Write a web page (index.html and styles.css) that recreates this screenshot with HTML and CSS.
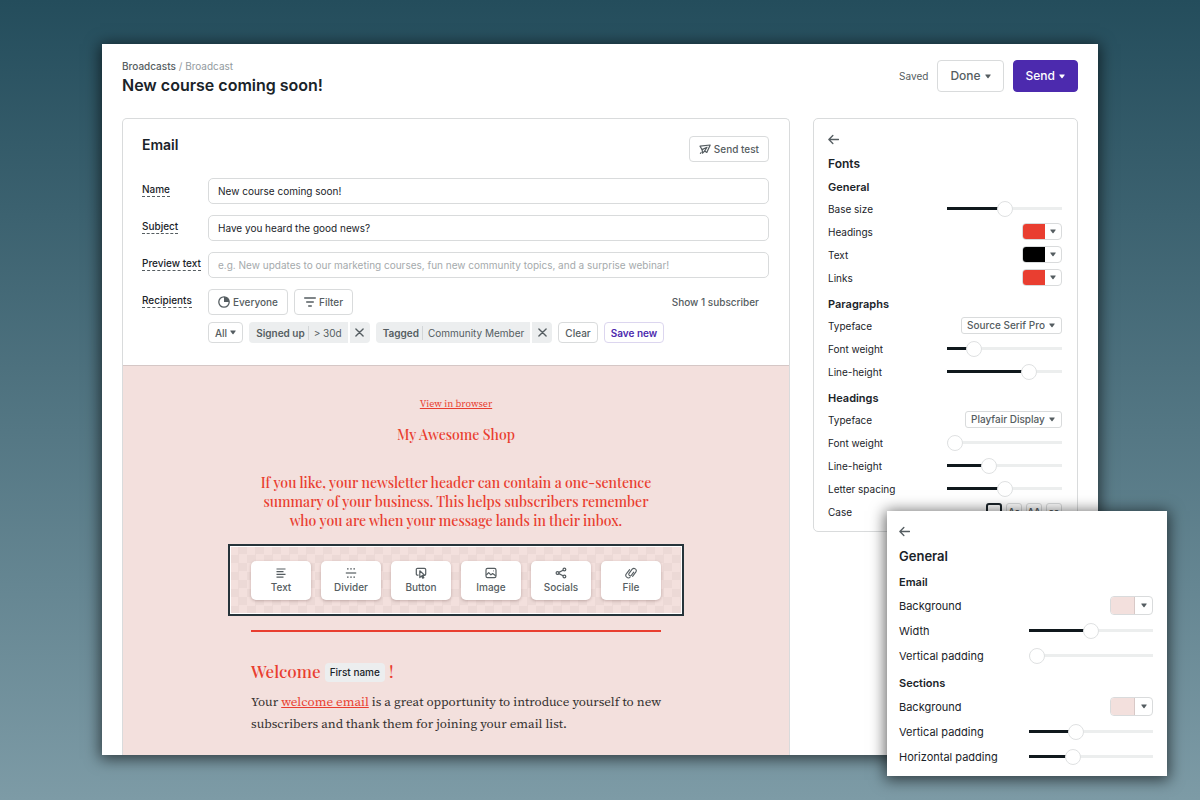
FILE: index.html
```html
<!DOCTYPE html>
<html lang="en">
<head>
<meta charset="utf-8">
<title>New course coming soon!</title>
<link rel="stylesheet" href="styles.css">
</head>
<body>
<svg class="defs" aria-hidden="true">
  <symbol id="caret" viewBox="0 0 6 5"><path d="M0.6 0.5h4.8q.6 0 .3.6L3.5 4.1q-.5.5-1 0L.3 1.100q-.3-.6.3-.6z" fill="currentColor"/></symbol>
  <symbol id="back" viewBox="0 0 10 10"><path d="M9.600 5H1M4.400 1.300L.8 5l3.600 3.700" fill="none" stroke="currentColor" stroke-width="1.200" stroke-linecap="round" stroke-linejoin="round"/></symbol>
  <symbol id="cross" viewBox="0 0 10 10"><path d="M1 1l8 8M9 1L1 9" fill="none" stroke="currentColor" stroke-width="1.500" stroke-linecap="round"/></symbol>
</svg>

<main class="window">
  <header class="topbar">
    <div class="titles">
      <nav class="crumbs"><a href="#">Broadcasts</a> / <span>Broadcast</span></nav>
      <h1>New course coming soon!</h1>
    </div>
    <div class="actions">
      <span class="saved">Saved</span>
      <button class="btn btn-large" type="button">Done <svg class="caret"><use href="#caret"/></svg></button>
      <button class="btn btn-large btn-primary" type="button">Send <svg class="caret"><use href="#caret"/></svg></button>
    </div>
  </header>

  <div class="columns">
    <section class="card editor">
      <div class="settings">
        <div class="settings-head">
          <h2>Email</h2>
          <button class="btn btn-medium" type="button">
            <svg class="icon-plane" viewBox="0 0 12 12" fill="none" stroke="currentColor" stroke-width="1.200" stroke-linejoin="round" stroke-linecap="round"><path d="M1 3.200L11.200 2 7.800 9.400 5.700 8 3.600 10.200 3.100 6.600z"/><path d="M3.100 6.600L8 4.200 5.700 8M1.400 10.400l.7-.7"/></svg>
            Send test
          </button>
        </div>
        <form class="fields">
          <label for="name"><span>Name</span></label>
          <input class="textbox" id="name" type="text" value="New course coming soon!">
          <label for="subject"><span>Subject</span></label>
          <input class="textbox" id="subject" type="text" value="Have you heard the good news?">
          <label for="preview"><span>Preview text</span></label>
          <input class="textbox" id="preview" type="text" placeholder="e.g. New updates to our marketing courses, fun new community topics, and a surprise webinar!">
          <div class="field-label"><span>Recipients</span></div>
          <div class="recipients">
            <button class="btn btn-medium" type="button">
              <svg class="icon-pie" viewBox="0 0 12 12"><circle cx="6" cy="6" r="5.200" fill="none" stroke="currentColor" stroke-width="1.300"/><path d="M6 6V.8A5.200 5.200 0 0 1 11.200 6z" fill="currentColor"/></svg>
              Everyone
            </button>
            <button class="btn btn-medium" type="button">
              <svg class="icon-filter" viewBox="0 0 12 12"><path d="M.7 2h10.600M2.700 6h6.600M4.700 10h2.600" fill="none" stroke="currentColor" stroke-width="1.400" stroke-linecap="round"/></svg>
              Filter
            </button>
            <a class="subscriber-link" href="#">Show 1 subscriber</a>
          </div>
          <div class="filters">
            <button class="btn btn-small" type="button">All <svg class="caret"><use href="#caret"/></svg></button>
            <div class="chip">
              <button class="chip-body" type="button"><strong>Signed up</strong><span>&gt; 30d</span></button>
              <button class="chip-close" type="button" aria-label="Remove signed up filter"><svg><use href="#cross"/></svg></button>
            </div>
            <div class="chip">
              <button class="chip-body" type="button"><strong>Tagged</strong><span>Community Member</span></button>
              <button class="chip-close" type="button" aria-label="Remove tag filter"><svg><use href="#cross"/></svg></button>
            </div>
            <button class="btn btn-small" type="button">Clear</button>
            <button class="btn btn-small btn-accent" type="button">Save new</button>
          </div>
        </form>
      </div>

      <article class="message">
        <a class="browser-link" href="#">View in browser</a>
        <h2 class="shop">My Awesome Shop</h2>
        <p class="summary">If you like, your newsletter header can contain a one-sentence<br>summary of your business. This helps subscribers remember<br>who you are when your message lands in their inbox.</p>
        <div class="blocks">
          <button class="block" type="button"><svg viewBox="0 0 12 12"><path d="M1.500 2h9M1.500 4.700h7M1.500 7.400h9M1.500 10.100h7"/></svg>Text</button>
          <button class="block" type="button"><svg viewBox="0 0 12 12"><path d="M.8 6h10.400"/><path d="M2 1.800h8.400M2 10.200h8.400" stroke-dasharray="1.600 1.600"/></svg>Divider</button>
          <button class="block" type="button"><svg viewBox="0 0 12 12"><path d="M3.500 8.200H2.600A1.300 1.300 0 0 1 1.300 6.900V2.600A1.300 1.300 0 0 1 2.600 1.300h6.800a1.300 1.300 0 0 1 1.300 1.300v4.300a1.300 1.300 0 0 1-.7 1.200M4.800 3.800v6.800l1.700-1.700 1.200 2.300 1.100-.6-1.200-2.200h2.200z"/></svg>Button</button>
          <button class="block" type="button"><svg viewBox="0 0 12 12"><rect x="1" y="1.300" width="10" height="9.400" rx="1.600"/><path d="M1.300 8l2.400-2.400 2.200 2.300L7.600 6.500 10.700 8.700M8 3.800h.6"/></svg>Image</button>
          <button class="block" type="button"><svg viewBox="0 0 12 12"><circle cx="2.500" cy="6" r="1.400"/><circle cx="9.400" cy="2.500" r="1.400"/><circle cx="9.400" cy="9.500" r="1.400"/><path d="M3.800 5.400L8.100 3.200M3.800 6.600L8.100 8.800"/></svg>Socials</button>
          <button class="block" type="button"><svg viewBox="0 0 12 12"><path stroke-width="1.100" stroke-linecap="round" d="M7.200 2.200L3.900 6.600A1.500 1.500 0 0 0 6.300 8.300L8.700 5.100M7.200 2.200A2.300 2.300 0 0 1 10.900 4.900L7.600 9.300M4.600 2.600L1.500 6.700A2.400 2.400 0 0 0 5.200 10"/></svg>File</button>
        </div>
        <hr class="rule">
        <div class="copy">
          <h3>Welcome <span class="merge-tag">First name</span> !</h3>
          <p>Your <a href="#">welcome email</a> is a great opportunity to introduce yourself to new<br>subscribers and thank them for joining your email list.</p>
        </div>
      </article>
    </section>

    <aside class="card panel fonts-panel">
      <button class="back" type="button" aria-label="Back"><svg><use href="#back"/></svg></button>
      <h2>Fonts</h2>
      <h3>General</h3>
      <div class="row"><label for="base">Base size</label><input id="base" type="range" value="50" style="--value:50%"></div>
      <div class="row"><span>Headings</span><button class="color" type="button" aria-label="Headings color"><i class="swatch red"></i><svg class="caret"><use href="#caret"/></svg></button></div>
      <div class="row"><span>Text</span><button class="color" type="button" aria-label="Text color"><i class="swatch black"></i><svg class="caret"><use href="#caret"/></svg></button></div>
      <div class="row"><span>Links</span><button class="color" type="button" aria-label="Links color"><i class="swatch red"></i><svg class="caret"><use href="#caret"/></svg></button></div>
      <h3>Paragraphs</h3>
      <div class="row"><label for="ptype">Typeface</label><span class="select"><select id="ptype"><option>Source Serif Pro</option></select><svg class="caret"><use href="#caret"/></svg></span></div>
      <div class="row"><label for="pweight">Font weight</label><input id="pweight" type="range" value="19" style="--value:19%"></div>
      <div class="row"><label for="pline">Line-height</label><input id="pline" type="range" value="75" style="--value:75%"></div>
      <h3>Headings</h3>
      <div class="row"><label for="htype">Typeface</label><span class="select"><select id="htype"><option>Playfair Display</option></select><svg class="caret"><use href="#caret"/></svg></span></div>
      <div class="row"><label for="hweight">Font weight</label><input id="hweight" type="range" value="0" style="--value:0%"></div>
      <div class="row"><label for="hline">Line-height</label><input id="hline" type="range" value="34" style="--value:34%"></div>
      <div class="row"><label for="hspace">Letter spacing</label><input id="hspace" type="range" value="50" style="--value:50%"></div>
      <div class="row"><span>Case</span><span class="cases"><button class="active" type="button">–</button><button type="button">Aa</button><button type="button">AA</button><button type="button">aa</button></span></div>
    </aside>
  </div>
</main>

<aside class="panel general-panel">
  <button class="back" type="button" aria-label="Back"><svg><use href="#back"/></svg></button>
  <h2>General</h2>
  <h3>Email</h3>
  <div class="row"><span>Background</span><button class="color" type="button" aria-label="Email background"><i class="swatch pink"></i><svg class="caret"><use href="#caret"/></svg></button></div>
  <div class="row"><label for="ewidth">Width</label><input id="ewidth" type="range" value="50" style="--value:50%"></div>
  <div class="row"><label for="epad">Vertical padding</label><input id="epad" type="range" value="0" style="--value:0%"></div>
  <h3>Sections</h3>
  <div class="row"><span>Background</span><button class="color" type="button" aria-label="Sections background"><i class="swatch pink"></i><svg class="caret"><use href="#caret"/></svg></button></div>
  <div class="row"><label for="svpad">Vertical padding</label><input id="svpad" type="range" value="36" style="--value:36%"></div>
  <div class="row"><label for="shpad">Horizontal padding</label><input id="shpad" type="range" value="33" style="--value:33%"></div>
</aside>
</body>
</html>
```
FILE: styles.css
```css
:root {
  --ink: #1a2329;
  --muted: #555d61;
  --line: #d9dbdc;
  --pink: #f3e0dd;
  --red: #e93e30;
  --purple: #4c2aae;
}

* { box-sizing: border-box; }

body {
  display: grid;
  position: relative;
  min-height: 100vh;
  margin: 0;
  padding: 44px 102px 45px;
  background: linear-gradient(#244d5c, #7d9ba6);
  color: var(--ink);
  font-family: Inter, "Liberation Sans", sans-serif;
  font-size: 11px;
  line-height: 14px;
}

h1, h2, h3, p { margin: 0; }
h1, h2, h3 { font-weight: 600; }
button, input, select { font: inherit; color: inherit; margin: 0; }
button { padding: 0; border: 0; background: none; white-space: nowrap; }
svg { flex: none; }
.defs { position: absolute; width: 0; height: 0; }
.caret { width: 6px; height: 5px; }

.window {
  display: flex;
  flex-direction: column;
  min-width: 0;
  padding: 16px 20px 0;
  background: #fff;
  box-shadow: 0 2px 14px 2px rgba(0, 0, 0, 0.6);
}

.topbar { display: flex; justify-content: space-between; }
.crumbs { font-size: 10px; line-height: 12px; color: #929a9e; }
.crumbs a { color: var(--muted); font-weight: 500; text-decoration: none; }
h1 { margin-top: 2px; font-size: 16px; line-height: 22px; }
.actions { display: flex; align-items: center; gap: 9px; height: 32px; }
.saved { color: var(--muted); font-size: 10px; }

.btn {
  display: inline-flex;
  align-items: center;
  justify-content: center;
  border: 1px solid var(--line);
  border-radius: 4px;
  background: #fff;
  color: var(--muted);
  font-weight: 500;
}
.btn-large { gap: 4px; height: 32px; padding: 0 12px; font-size: 12px; }
.btn-primary { border-color: var(--purple); background: var(--purple); color: #fff; }
.btn-medium { gap: 3px; height: 26px; padding: 0 9px; font-size: 10px; }
.btn-small { gap: 3px; height: 21px; padding: 0 6px; font-size: 10px; }
.btn-accent { border-color: #dcd6ef; color: var(--purple); font-weight: 600; }
.icon-plane, .icon-pie, .icon-filter { width: 12px; height: 12px; }

.columns {
  display: grid;
  flex: 1;
  grid-template-columns: minmax(0, 1fr) 265px;
  gap: 23px;
  align-items: start;
  margin-top: 22px;
}
.card { border: 1px solid var(--line); border-radius: 5px; }

.editor {
  display: flex;
  flex-direction: column;
  align-self: stretch;
  border-bottom: 0;
  border-radius: 5px 5px 0 0;
}
.settings { padding: 17px 20px 22px 19px; }
.settings-head { display: flex; align-items: start; justify-content: space-between; height: 42px; }
.settings-head h2 { font-size: 14px; line-height: 18px; }
.fields {
  display: grid;
  grid-template-columns: 66px minmax(0, 1fr);
  row-gap: 11px;
}
.fields label, .field-label { padding-top: 5px; font-size: 10px; line-height: 13px; font-weight: 500; white-space: nowrap; }
.fields label span, .field-label span { display: inline-block; border-bottom: 1px dashed var(--muted); }
.textbox {
  width: 100%;
  height: 26px;
  padding: 0 9px;
  border: 1px solid var(--line);
  border-radius: 5px;
  background: #fff;
  font-size: 10px;
}
.textbox::placeholder { color: #a5aaac; opacity: 1; }
.recipients { display: flex; align-items: center; gap: 6px; }
.subscriber-link { margin-left: auto; padding-right: 10px; color: var(--muted); font-size: 10px; font-weight: 500; text-decoration: none; }
.filters { display: flex; grid-column: 2; gap: 6px; margin-top: -4px; }
.chip { display: flex; gap: 2px; height: 21px; color: var(--muted); font-size: 10px; }
.chip-body, .chip-close { background: #eceeef; }
.chip-body { display: flex; align-items: center; padding: 0 6px 0 7px; border-radius: 4px 0 0 4px; }
.chip-body strong { padding-right: 3px; border-right: 1px solid #d3d6d8; font-weight: 600; }
.chip-body span { padding-left: 5px; }
.chip-close { display: grid; place-items: center; width: 20px; border-radius: 0 4px 4px 0; }
.chip-close svg { width: 9px; height: 9px; }

.message {
  display: flex;
  flex: 1;
  flex-direction: column;
  align-items: center;
  padding: 32px 20px 20px;
  border-top: 1px solid #d5c7c6;
  background: var(--pink);
  color: var(--red);
  font-family: "Playfair Display", "Liberation Serif", serif;
  font-weight: 500;
}
.browser-link, .copy p {
  font-family: "Source Serif Pro", "Source Serif 4", "Noto Serif", "Liberation Serif", serif;
  font-weight: 400;
}
.browser-link { font-size: 10px; line-height: 12px; color: var(--red); }
.shop { margin-top: 15px; font-size: 14px; line-height: 20px; font-weight: 500; }
.summary { margin-top: 28px; font-size: 14px; line-height: 19px; text-align: center; }
.blocks {
  display: flex;
  justify-content: center;
  gap: 10px;
  margin-top: 14px;
  padding: 15px 21px 14px;
  border: 2px solid #26343a;
  background: repeating-conic-gradient(#ecd9d6 0 25%, #f3e0dd 0 50%) 0 0 / 17px 17px;
  box-shadow: inset 0 0 0 1px #fff;
}
.block {
  display: flex;
  flex-direction: column;
  align-items: center;
  gap: 1px;
  width: 60px;
  height: 39px;
  padding-top: 6px;
  border-radius: 5px;
  background: #fff;
  box-shadow: 0 1px 3px rgba(60, 20, 20, 0.25);
  color: var(--muted);
  font: 500 10px/14px Inter, "Liberation Sans", sans-serif;
}
.block svg { width: 12px; height: 12px; fill: none; stroke: currentColor; stroke-width: 1.2; stroke-linejoin: round; }
.rule { width: 410px; height: 2px; margin: 14px 0 0; border: 0; background: var(--red); }
.copy { width: 410px; margin-top: 27px; white-space: nowrap; }
.copy h3 { font-size: 17px; line-height: 24px; font-weight: 500; }
.merge-tag {
  display: inline-block;
  padding: 3px 5px;
  border-radius: 4px;
  background: #eceeef;
  color: var(--ink);
  font: 500 10px/13px Inter, "Liberation Sans", sans-serif;
  vertical-align: 2px;
}
.copy p { margin-top: 8px; color: #33302f; font-size: 13px; line-height: 22px; }
.copy a { color: var(--red); }

.panel { display: flex; flex-direction: column; }
.panel .row { display: flex; align-items: center; justify-content: space-between; }
.back { display: grid; place-items: center start; color: var(--muted); }
.back svg { width: 11px; height: 11px; }

.fonts-panel { padding: 13px 15px 8px 14px; }
.fonts-panel .back { height: 14px; }
.fonts-panel h2 { margin-top: 9px; font-size: 12px; line-height: 17px; }
.fonts-panel h3 { margin-top: 5px; font-size: 11px; line-height: 20px; }
.fonts-panel .row { height: 23px; font-size: 10px; }

.general-panel {
  position: absolute;
  right: 33px;
  bottom: 24px;
  width: 280px;
  padding: 13px 14px 7px 12px;
  background: #fff;
  box-shadow: 0 2px 14px 2px rgba(0, 0, 0, 0.6);
}
.general-panel .back { height: 14px; }
.general-panel h2 { margin-top: 8px; font-size: 13px; line-height: 21px; }
.general-panel h3 { margin-top: 5px; font-size: 11px; line-height: 21px; }
.general-panel .row { height: 25px; font-size: 11px; }

input[type="range"] {
  width: 115px;
  height: 16px;
  appearance: none;
  background: linear-gradient(to right, #10181d var(--value), #eceeee var(--value)) center / 100% 3px no-repeat;
}
input[type="range"]::-webkit-slider-thumb {
  width: 16px;
  height: 16px;
  appearance: none;
  border: 1px solid #dfe1e2;
  border-radius: 50%;
  background: #fff;
}
.general-panel input[type="range"] { width: 124px; }

.color {
  display: flex;
  width: 40px;
  height: 17px;
  overflow: hidden;
  border: 1px solid var(--line);
  border-radius: 4px;
  color: var(--muted);
}
.color .caret { align-self: center; margin: auto; }
.swatch { width: 22px; height: 100%; }
.red { background: var(--red); }
.black { background: #000; }
.pink { background: var(--pink); border-right: 1px solid #d8c9c7; }
.general-panel .color { width: 43px; height: 19px; }
.general-panel .swatch { width: 24px; }

.select { position: relative; display: flex; color: var(--muted); }
.select select {
  height: 17px;
  padding: 0 16px 0 5px;
  appearance: none;
  border: 1px solid var(--line);
  border-radius: 3px;
  background: #fff;
  font-weight: 500;
  line-height: 15px;
}
.select .caret { position: absolute; top: 6px; right: 7px; pointer-events: none; }

.cases { display: flex; gap: 4px; }
.cases button { width: 16px; height: 17px; border: 1px solid var(--line); border-radius: 3px; color: var(--muted); font-size: 9px; line-height: 15px; font-weight: 600; }
.cases .active { border: 2px solid var(--ink); line-height: 13px; }
```
